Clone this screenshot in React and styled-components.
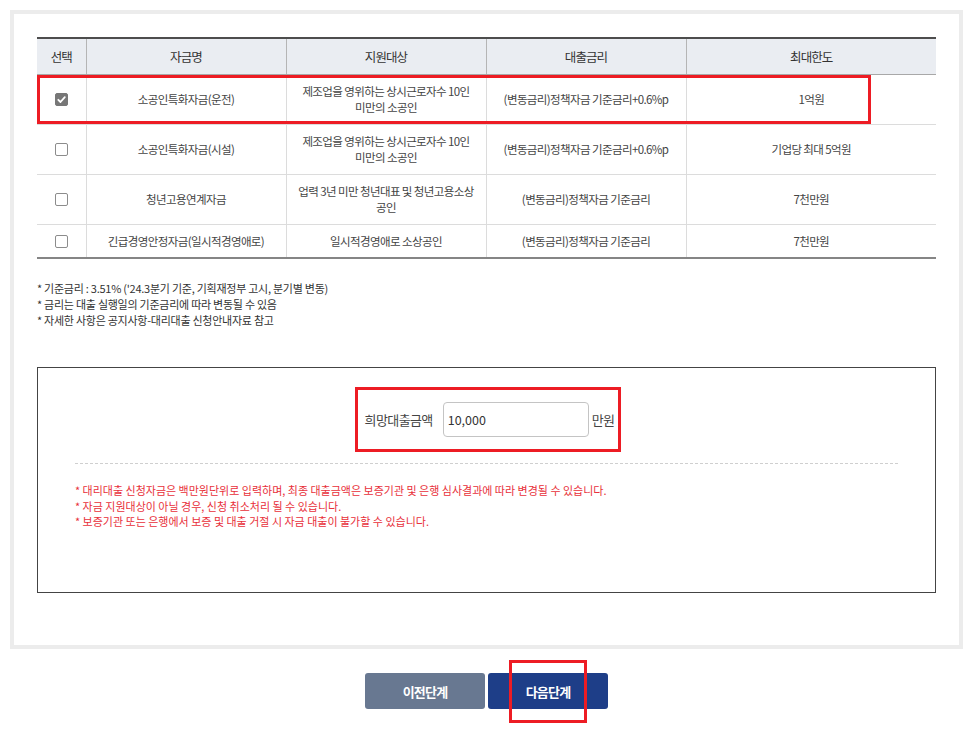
import React from "react";
import styled, { createGlobalStyle } from "styled-components";

const Global = createGlobalStyle`
  html, body { margin: 0; padding: 0; background: #fff; }
  body { font-family: "Noto Sans CJK KR", "Noto Sans", sans-serif; color: #333; }
  * { box-sizing: border-box; }
`;

const Page = styled.div`
  width: 974px;
  min-height: 748px;
  padding: 10px 0 39px 10px;
`;

const Frame = styled.section`
  width: 953px;
  border: 4px solid #ececec;
  background: #fff;
  padding: 23px 23px 52px 23px;
`;

const TableWrap = styled.div`
  position: relative;
`;

const Table = styled.table`
  width: 899px;
  border-collapse: collapse;
  table-layout: fixed;
  border-top: 2px solid #4d4d4d;
  border-bottom: 2px solid #858585;
`;

const Th = styled.th`
  height: 36px;
  padding: 0;
  background: #eaedf2;
  font-weight: 400;
  font-size: 12.5px;
  letter-spacing: -0.9px;
  color: #333;
  border-bottom: 1px solid #a8a8a8;
  border-left: 1px solid #b5b5b5;
  &:first-child { border-left: none; }
  text-align: center;
`;

const Td = styled.td`
  height: ${(p) => (p.$short ? "34px" : "50px")};
  padding: 0;
  font-size: 11.5px;
  line-height: 16px;
  letter-spacing: -0.6px;
  color: #444;
  text-align: center;
  border-bottom: 1px solid #dcdcdc;
  border-left: 1px solid #dcdcdc;
  &:first-child { border-left: none; }
`;

const Box = styled.span`
  display: inline-block;
  width: 13px;
  height: 13px;
  border-radius: 2px;
  vertical-align: middle;
  border: 1px solid ${(p) => (p.$checked ? "#777" : "#8c8c8c")};
  background: ${(p) => (p.$checked ? "#777" : "#fff")};
  position: relative;
  margin-top: -2px;
`;

const Highlight = styled.div`
  position: absolute;
  left: 0;
  top: 38px;
  width: 834px;
  height: 49px;
  border: 3px solid #ed1c24;
  pointer-events: none;
`;

const Notes = styled.ul`
  list-style: none;
  margin: 21px 0 0 0;
  padding: 0;
  font-size: 11px;
  line-height: 16px;
  letter-spacing: -0.25px;
  color: #333;
`;

const AmountBox = styled.div`
  margin-top: 39px;
  height: 226px;
  border: 1px solid #444;
  padding-top: 19px;
`;

const AmountRow = styled.div`
  display: flex;
  justify-content: center;
`;

const RedFrame = styled.div`
  display: flex;
  align-items: center;
  border: 3px solid #ed1c24;
  padding: 12px 2px 12px 7px;
  margin-left: 3px;
`;

const Label = styled.label`
  font-size: 13px;
  letter-spacing: -0.6px;
  color: #444;
  margin-right: 10px;
`;

const Input = styled.input`
  width: 146px;
  height: 35px;
  border: 1px solid #c4c4c4;
  border-radius: 4px;
  padding: 0 4px;
  font-family: "Noto Sans CJK KR", "Noto Sans", sans-serif;
  font-size: 12.5px;
  color: #333;
  outline: none;
`;

const Unit = styled.span`
  font-size: 13px;
  letter-spacing: -0.6px;
  color: #444;
  margin-left: 3px;
  margin-right: 2px;
`;

const Dashed = styled.hr`
  margin: 11px 37px 0 37px;
  border: none;
  border-top: 1px dashed #cfcfcf;
  height: 0;
`;

const Warn = styled.ul`
  list-style: none;
  margin: 19px 0 0 0;
  padding: 0 0 0 37px;
  font-size: 11px;
  line-height: 15.5px;
  letter-spacing: 0;
  color: #e8303a;
`;

const Buttons = styled.div`
  width: 953px;
  display: flex;
  justify-content: center;
  gap: 3px;
  margin-top: 24px;
`;

const BtnSlot = styled.div`
  position: relative;
`;

const Btn = styled.button`
  display: block;
  width: 120px;
  height: 36px;
  border: none;
  border-radius: 3px;
  background: ${(p) => (p.$primary ? "#1e3e88" : "#687891")};
  color: #fff;
  font-family: "Noto Sans CJK KR", "Noto Sans", sans-serif;
  font-size: 13px;
  font-weight: 700;
  letter-spacing: -0.8px;
  cursor: pointer;
`;

const BtnMark = styled.span`
  position: absolute;
  left: 21px;
  top: -13px;
  width: 78px;
  height: 63px;
  border: 3px solid #ed1c24;
  pointer-events: none;
`;

const Check = () => (
  <svg width="11" height="11" viewBox="0 0 11 11" style={{ position: "absolute", left: 0, top: 0 }}>
    <path d="M2.3 5.8 L4.5 8 L8.8 3.2" fill="none" stroke="#fff" strokeWidth="1.8" strokeLinecap="round" strokeLinejoin="round" />
  </svg>
);

const rows = [
  { checked: true, name: "소공인특화자금(운전)", target: ["제조업을 영위하는 상시근로자수 10인", "미만의 소공인"], rate: "(변동금리)정책자금 기준금리+0.6%p", limit: "1억원" },
  { checked: false, name: "소공인특화자금(시설)", target: ["제조업을 영위하는 상시근로자수 10인", "미만의 소공인"], rate: "(변동금리)정책자금 기준금리+0.6%p", limit: "기업당 최대 5억원" },
  { checked: false, name: "청년고용연계자금", target: ["업력 3년 미만 청년대표 및 청년고용소상", "공인"], rate: "(변동금리)정책자금 기준금리", limit: "7천만원" },
  { checked: false, name: "긴급경영안정자금(일시적경영애로)", target: ["일시적경영애로 소상공인"], rate: "(변동금리)정책자금 기준금리", limit: "7천만원", short: true },
];

export default function App() {
  return (
    <Page>
      <Global />
      <Frame>
        <TableWrap>
          <Table>
            <colgroup>
              <col style={{ width: 49 }} />
              <col style={{ width: 200 }} />
              <col style={{ width: 200 }} />
              <col style={{ width: 200 }} />
              <col style={{ width: 250 }} />
            </colgroup>
            <thead>
              <tr>
                <Th>선택</Th>
                <Th>자금명</Th>
                <Th>지원대상</Th>
                <Th>대출금리</Th>
                <Th>최대한도</Th>
              </tr>
            </thead>
            <tbody>
              {rows.map((r, i) => (
                <tr key={i}>
                  <Td $short={r.short}>
                    <Box $checked={r.checked}>{r.checked && <Check />}</Box>
                  </Td>
                  <Td $short={r.short}>{r.name}</Td>
                  <Td $short={r.short}>
                    {r.target.map((t, j) => (
                      <React.Fragment key={j}>
                        {j > 0 && <br />}
                        {t}
                      </React.Fragment>
                    ))}
                  </Td>
                  <Td $short={r.short}>{r.rate}</Td>
                  <Td $short={r.short}>{r.limit}</Td>
                </tr>
              ))}
            </tbody>
          </Table>
          <Highlight />
        </TableWrap>

        <Notes>
          <li>* 기준금리 : 3.51% ('24.3분기 기준, 기획재정부 고시, 분기별 변동)</li>
          <li>* 금리는 대출 실행일의 기준금리에 따라 변동될 수 있음</li>
          <li>* 자세한 사항은 공지사항-대리대출 신청안내자료 참고</li>
        </Notes>

        <AmountBox>
          <AmountRow>
            <RedFrame>
              <Label htmlFor="amt">희망대출금액</Label>
              <Input id="amt" defaultValue="10,000" />
              <Unit>만원</Unit>
            </RedFrame>
          </AmountRow>
          <Dashed />
          <Warn>
            <li>* 대리대출 신청자금은 백만원단위로 입력하며, 최종 대출금액은 보증기관 및 은행 심사결과에 따라 변경될 수 있습니다.</li>
            <li>* 자금 지원대상이 아닐 경우, 신청 취소처리 될 수 있습니다.</li>
            <li>* 보증기관 또는 은행에서 보증 및 대출 거절 시 자금 대출이 불가할 수 있습니다.</li>
          </Warn>
        </AmountBox>
      </Frame>
      <Buttons>
        <BtnSlot>
          <Btn type="button">이전단계</Btn>
        </BtnSlot>
        <BtnSlot>
          <Btn type="button" $primary>다음단계</Btn>
          <BtnMark />
        </BtnSlot>
      </Buttons>
    </Page>
  );
}
